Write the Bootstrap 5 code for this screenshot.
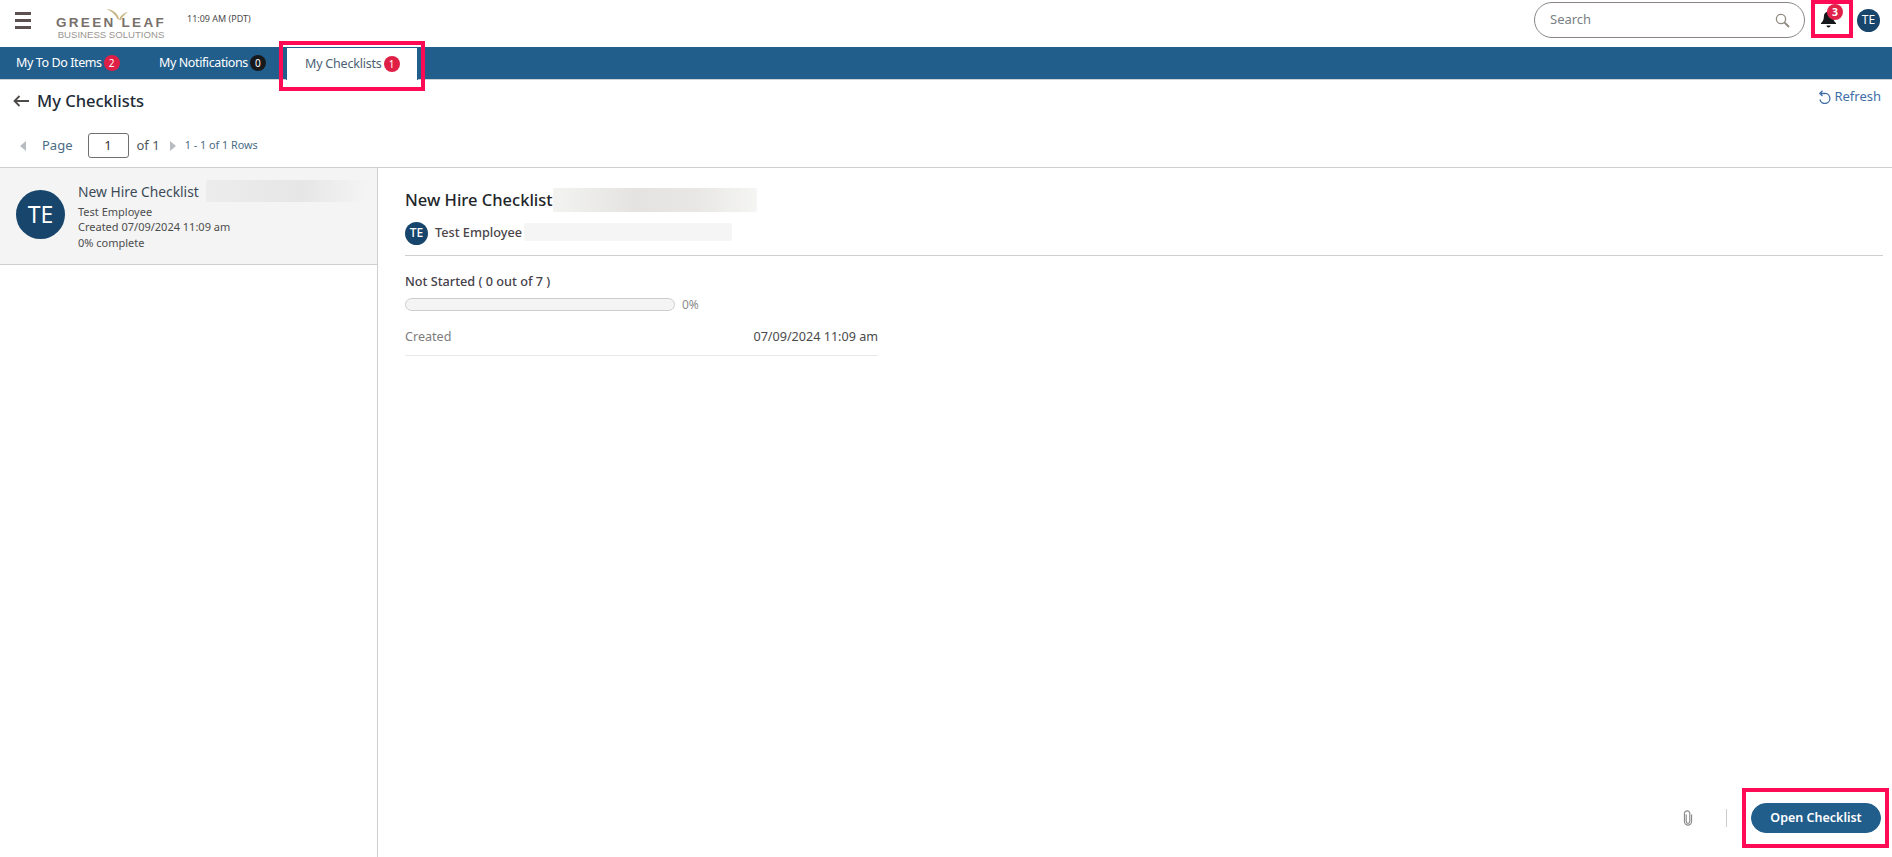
<!DOCTYPE html>
<html lang="en"><head><meta charset="utf-8"><title>My Checklists</title>
<link rel="stylesheet" href="https://cdn.jsdelivr.net/npm/bootstrap@5.3.0/dist/css/bootstrap.min.css">
<style>
html,body{height:100%;overflow:hidden}
body{font-family:"Noto Sans","Open Sans",sans-serif;color:#212529;background:#fff;display:flex;flex-direction:column;font-size:12px}
.hl{position:absolute;border:4px solid #ff0a54;pointer-events:none;z-index:5}
.hl-tab{left:279px;top:41px;width:146px;height:50px}
.hl-bell{left:1811px;top:0;width:42px;height:38px}
.hl-btn{left:1742px;top:788px;width:147px;height:60px}
.topbar{height:47px;flex:none;padding:0 12px 7px 15px}
.burger{width:16px;margin-right:25px}
.burger i{display:block;height:3px;background:#5d5050;margin-bottom:4px}
.burger i:last-child{margin-bottom:0}
.logo{width:110px;height:40px;position:relative;margin-right:21px;padding-top:16px;line-height:1;text-align:center;color:#77706b}
.logo b{display:block;font-family:"Liberation Sans",sans-serif;font-size:13.5px;letter-spacing:2.3px;font-weight:700;white-space:nowrap}
.logo span{display:block;font-family:"Liberation Sans",sans-serif;font-size:9.6px;color:#9a9590;white-space:nowrap}
.logo svg{position:absolute;left:50px;top:8px}
.clock{font-size:9px;color:#4a4a4a;margin-top:-2px}
.searchbox{width:271px;height:36px;border:1px solid #8a8484;border-radius:18px;padding:0 14px 0 15px;margin-right:14px;color:#7a7f85;font-size:13px}
.bellwrap{width:26px;height:30px;position:relative;margin-right:12px}
.bellsvg{position:absolute;left:1px;top:5px}
.bellcount{position:absolute;left:8px;top:-1px;width:16px;height:16px;border-radius:50%;background:#e0224a;color:#fff;font-size:10.5px;font-weight:700;line-height:16px;text-align:center}
.avat{background:#17456b;color:#fff;border-radius:50%;display:flex;align-items:center;justify-content:center;flex:none}
.avat-s{width:23px;height:23px;font-size:12px}
.avat-l{width:49px;height:49px;font-size:23px}
.tabbar{height:33px;flex:none;background:#225e8c;border-bottom:1px solid #cfd2d4;padding-left:16px}
.tabx{color:#fff;font-size:12.5px;letter-spacing:-.4px;height:32px;white-space:nowrap}
.tabx-a{width:143px}
.tabx-b{width:127px}
.tabx-c{background:#fff;color:#4b5f73;width:132px;height:33px;padding-left:18px;border:solid #225e8c;border-width:1px 1px 0 1px;letter-spacing:-.2px}
.cnt{width:16px;height:16px;border-radius:50%;color:#fff;font-size:10px;line-height:16px;text-align:center;margin-left:2px;display:inline-block;letter-spacing:0}
.cnt-r{background:#df1f45}
.cnt-k{background:#17191c}
.headrow{height:88px;flex:none;border-bottom:1px solid #cfcfcf;position:relative}
.ttl{font-size:16.5px;font-weight:500;color:#212b36;line-height:22px}
.backrow{padding:10px 0 0 13px}
.backrow svg{margin-right:8px}
.refresh{position:absolute;right:11px;top:7px;color:#3e6ea5;font-size:13px;gap:3px}
.pager{margin-top:21px;padding-left:20px;font-size:13px;color:#4a6c85;height:25px}
.pgbox{width:41px;height:25px;border:1px solid #6f6f6f;border-radius:3px;color:#333;text-align:center;line-height:23px;margin:0 8px 0 15px;font-size:13px}
.tri-l{width:0;height:0;border:5px solid transparent;border-right:6px solid #b8bcc0;border-left:0;margin-right:16px}
.tri-r{width:0;height:0;border:5px solid transparent;border-left:6px solid #b8bcc0;border-right:0;margin:0 9px 0 10px}
.ofn{color:#50565c}
.rows{font-size:10.8px;color:#4a6c85}
.panes{flex:1;min-height:0}
.leftp{width:378px;flex:none;border-right:1px solid #cfcfcf}
.itemx{height:97px;background:#f4f4f4;border-bottom:1px solid #cfcfcf;padding:14px 0 0 16px;gap:13px}
.itemx .avat{margin-top:8px}
.ititle{font-size:13.8px;color:#3c4a57;line-height:19px;position:relative}
.isub{font-size:11px;color:#4d4d4d;line-height:15.6px}
.ititle + .isub{margin-top:2.5px}
.blur1{position:absolute;height:22px;border-radius:2px;background:linear-gradient(90deg,#ececec,#e6e6e6 60%,#f4f4f4)}
.blur-a{left:128px;top:-2px;width:160px}
.rightp{padding:20px 9px 0 27px;position:relative;min-width:0}
.rtitle{font-size:16.5px;font-weight:500;color:#212529;line-height:24px;position:relative}
.blur-b{left:148px;top:0;width:204px;height:24px;background:linear-gradient(90deg,#f3f3f2,#e4e3e1 40%,#e8e7e5 70%,#f5f5f4)}
.owner{margin-top:9px;gap:7px;height:24px;font-size:12.7px;font-weight:500;color:#4a4448;position:relative}
.blur-c{left:119px;top:2px;width:208px;height:18px;background:#f5f5f5}
.rule{border-top:1px solid #cfcfcf;margin-top:10px}
.status{font-size:12.7px;font-weight:500;color:#45404a;margin-top:17px;line-height:17px}
.barline{margin-top:7px;gap:7px;color:#8c8c8c;font-size:12px;height:15px}
.trackx{width:270px;height:13px;background:#f4f4f4;border:1px solid #cdcdcd;border-radius:7px}
.kv{width:473px;height:37px;margin-top:7px;border-bottom:1px solid #e8e8e8;font-size:12.6px}
.kv span:first-child{color:#7d7d7d}
.kv span:last-child{color:#4a4a4a}
.actions{right:11px;bottom:24px}
.clip{margin-right:32px}
.vbar{width:1px;height:18px;background:#ccc;margin-right:24px}
.openbtn{--bs-btn-bg:#225e8c;--bs-btn-border-color:#225e8c;--bs-btn-color:#fff;--bs-btn-hover-bg:#225e8c;--bs-btn-hover-color:#fff;width:130px;height:30px;padding:0;font-size:12.5px;font-weight:600;border-radius:15px}
</style></head>
<body class="position-relative">
<div class="hl hl-tab"></div><div class="hl hl-bell"></div><div class="hl hl-btn"></div>

<header class="topbar d-flex align-items-center">
  <div class="burger"><i></i><i></i><i></i></div>
  <div class="logo">
    <svg width="26" height="12" viewBox="0 0 26 12"><path d="M12 12C9 6 5 3 0 1c5 0 11 3 13 9zM13 12c1-4 4-7 9-8-3 2-6 5-7 8z" fill="#c9b98a"/></svg>
    <b>GREEN LEAF</b><span>BUSINESS SOLUTIONS</span>
  </div>
  <div class="clock">11:09 AM (PDT)</div>
  <div class="searchbox d-flex align-items-center justify-content-between ms-auto">
    <span>Search</span>
    <svg width="15" height="15" viewBox="0 0 15 15" fill="none" stroke="#8f8a80" stroke-width="1.3"><circle cx="6" cy="6" r="4.6"/><path d="M9.5 9.5l4.5 4.5" stroke-width="1.8"/></svg>
  </div>
  <div class="bellwrap">
    <svg class="bellsvg" width="17" height="19" viewBox="0 0 17 19"><path d="M8.5 1.5c-3 0-4.6 2.2-4.6 5 0 3.500-1.300 5-2.900 6.600v1h15v-1c-1.600-1.600-2.900-3.100-2.900-6.600 0-2.800-1.600-5-4.600-5zM6.500 15.500h4c0 1.200-.9 2-2 2s-2-.8-2-2z" fill="#15171a"/></svg>
    <span class="bellcount">3</span>
  </div>
  <div class="avat avat-s">TE</div>
</header>

<nav class="tabbar d-flex">
  <div class="tabx tabx-a d-flex align-items-center">My To Do Items<span class="cnt cnt-r">2</span></div>
  <div class="tabx tabx-b d-flex align-items-center">My Notifications<span class="cnt cnt-k">0</span></div>
  <div class="tabx tabx-c d-flex align-items-center">My Checklists<span class="cnt cnt-r">1</span></div>
</nav>

<section class="headrow">
  <div class="backrow d-flex align-items-center">
    <svg width="16" height="12" viewBox="0 0 16 12" fill="none" stroke="#4f4a4a" stroke-width="1.800"><path d="M16 6H1.500M6.500 1L1.500 6l5 5"/></svg>
    <span class="ttl">My Checklists</span>
  </div>
  <div class="refresh d-flex align-items-center">
    <svg width="13" height="14" viewBox="0 0 13 14" fill="none" stroke="#3e6ea5" stroke-width="1.300"><path d="M3 3.500h3.500a5 5 0 1 1-4.500 6M4.500 .8L1.800 3.500l2.700 2.500"/></svg>Refresh
  </div>
  <div class="pager d-flex align-items-center">
    <span class="tri-l"></span><span>Page</span><span class="pgbox">1</span><span class="ofn">of 1</span><span class="tri-r"></span><span class="rows">1 - 1 of 1 Rows</span>
  </div>
</section>

<main class="panes d-flex">
  <aside class="leftp">
    <div class="itemx d-flex">
      <div class="avat avat-l">TE</div>
      <div class="flex-grow-1">
        <div class="ititle">New Hire Checklist<span class="blur1 blur-a"></span></div>
        <div class="isub">Test Employee</div>
        <div class="isub">Created 07/09/2024 11:09 am</div>
        <div class="isub">0% complete</div>
      </div>
    </div>
  </aside>
  <div class="rightp flex-grow-1">
    <div class="rtitle">New Hire Checklist<span class="blur1 blur-b"></span></div>
    <div class="owner d-flex align-items-center"><div class="avat avat-s">TE</div><span>Test Employee</span><span class="blur1 blur-c"></span></div>
    <div class="rule"></div>
    <div class="status">Not Started ( 0 out of 7 )</div>
    <div class="barline d-flex align-items-center"><div class="trackx"></div><span>0%</span></div>
    <div class="kv d-flex align-items-center justify-content-between"><span>Created</span><span>07/09/2024 11:09 am</span></div>
  </div>
</main>
<div class="actions position-absolute d-flex align-items-center">
  <svg class="clip" width="12" height="16" viewBox="0 0 12 18" fill="none" stroke="#8a8a8a" stroke-width="1.300"><path d="M4 5v8a2 2 0 0 0 4 0V4a3 3 0 0 0-6 0v9a4 4 0 0 0 8 0V5"/></svg>
  <div class="vbar"></div>
  <button class="btn openbtn" type="button">Open Checklist</button>
</div>
<script src="https://cdn.jsdelivr.net/npm/bootstrap@5.3.0/dist/js/bootstrap.bundle.min.js"></script>
</body></html>
